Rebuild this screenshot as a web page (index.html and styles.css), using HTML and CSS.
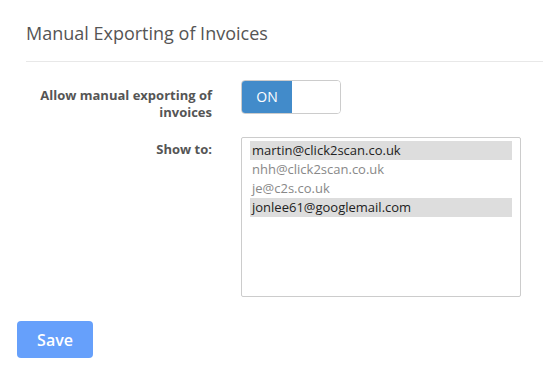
FILE: index.html
```html
<!DOCTYPE html>
<html lang="en">
<head>
    <meta charset="UTF-8">
    <meta name="viewport" content="width=device-width, initial-scale=1.0">
    <title>Manual Exporting of Invoices</title>
    <link rel="stylesheet" href="styles.css">
</head>
<body>
    <div class="panel">
        <h3 class="panel-title">Manual Exporting of Invoices</h3>

        <div class="form-row">
            <label class="row-label">Allow manual exporting of invoices</label>
            <div class="switch">
                <span class="switch-on">ON</span>
                <span class="switch-off"></span>
            </div>
        </div>

        <div class="form-row">
            <label class="row-label label-top">Show to:</label>
            <div class="listbox">
                <div class="option selected">martin@click2scan.co.uk</div>
                <div class="option">nhh@click2scan.co.uk</div>
                <div class="option">je@c2s.co.uk</div>
                <div class="option selected">jonlee61@googlemail.com</div>
            </div>
        </div>
    </div>

    <button type="button" class="save-btn">Save</button>
</body>
</html>
```

FILE: styles.css
```css
body {
    font-family: 'Open Sans', sans-serif;
    margin: 0;
    padding: 0;
    background: #fff;
    color: #333;
}

.panel {
    padding-left: 26px;
}

.panel-title {
    margin: 0;
    padding-top: 20px;
    padding-bottom: 15px;
    font-size: 18px;
    font-weight: normal;
    line-height: 26px;
    color: #555;
    border-bottom: 1px solid #e8e8e8;
}

.form-row {
    display: flex;
    align-items: flex-start;
    gap: 29px;
}

.form-row:first-of-type {
    margin-top: 18px;
}

.form-row + .form-row {
    margin-top: 16px;
}

.row-label {
    width: 186px;
    text-align: right;
    font-size: 13px;
    font-weight: bold;
    line-height: 17px;
    color: #555;
    padding-top: 7px;
}

.label-top {
    padding-top: 4px;
}

.switch {
    display: flex;
    width: 98px;
    height: 32px;
    border: 1px solid #ccc;
    border-radius: 4px;
    overflow: hidden;
}

.switch-on {
    width: 50px;
    background: #428bca;
    color: #fff;
    font-size: 14px;
    line-height: 32px;
    text-align: center;
}

.switch-off {
    flex: 1;
    background: #fff;
}

.listbox {
    width: 262px;
    height: 150px;
    border: 1px solid #ccc;
    border-radius: 2px;
    padding: 3px 8px 5px 8px;
}

.option {
    font-size: 13px;
    line-height: 19px;
    padding-left: 2px;
    color: #888;
}

.option.selected {
    background: #ddd;
    color: #222;
}

.save-btn {
    margin: 24px 0 0 17px;
    width: 76px;
    height: 37px;
    background: #66a0fb;
    border: none;
    border-radius: 4px;
    color: #fff;
    font-family: 'Open Sans', sans-serif;
    font-size: 16px;
    font-weight: 600;
    cursor: pointer;
}
```
